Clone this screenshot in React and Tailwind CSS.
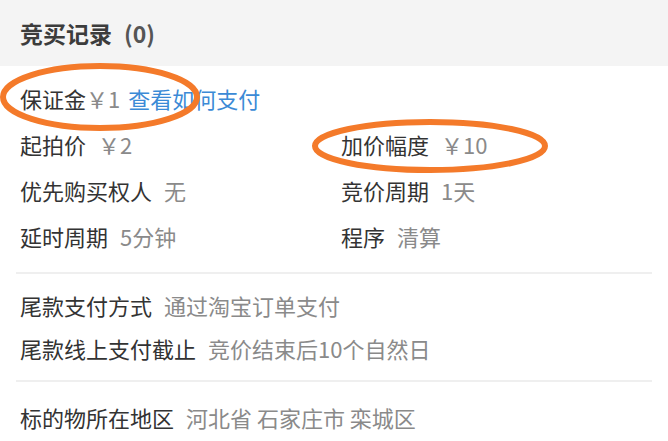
const font = {
  fontFamily: '"Noto Sans CJK SC", "Noto Sans", sans-serif',
};

const Row = ({ label, value, h = "h-[46px]" }) => (
  <div className={`flex items-center ${h} whitespace-nowrap`}>
    <span className="text-[#333333]">{label}</span>
    <span className="ml-3 text-[#8a8a8a]">{value}</span>
  </div>
);

const Divider = () => <div className="mx-4 h-[2px] bg-[#efefef]" />;

export default function App() {
  return (
    <div
      className="relative w-[668px] h-[441px] overflow-hidden bg-white text-[22px] leading-none"
      style={font}
    >
      {/* header */}
      <div className="h-[66px] bg-[#f4f4f4] px-5 flex items-center text-[23px]">
        <span className="font-bold text-[#3c3c3c]">竞买记录</span>
        <span className="ml-3 font-bold text-[#555555]">(0)</span>
      </div>

      {/* auction rules */}
      <div className="px-5 pt-[9px] pb-[13px]">
        <div className="flex items-center h-[46px] whitespace-nowrap">
          <span className="text-[#333333]">保证金</span>
          <span className="text-[#8a8a8a]">￥1</span>
          <span className="ml-2 text-[#3b8ad6]">查看如何支付</span>
        </div>
        <div className="grid grid-cols-[321px_1fr]">
          <Row label="起拍价" value="￥2" />
          <Row label="加价幅度" value="￥10" />
          <Row label="优先购买权人" value="无" />
          <Row label="竞价周期" value="1天" />
          <Row label="延时周期" value="5分钟" />
          <Row label="程序" value="清算" />
        </div>
      </div>

      <Divider />

      {/* payment */}
      <div className="px-5 pt-[9px] pb-[11px]">
        <Row label="尾款支付方式" value="通过淘宝订单支付" h="h-[43px]" />
        <Row label="尾款线上支付截止" value="竞价结束后10个自然日" h="h-[43px]" />
      </div>

      <Divider />

      <div className="px-5 pt-[13px]">
        <Row label="标的物所在地区" value="河北省 石家庄市 栾城区" h="h-[43px]" />
      </div>

      {/* hand-drawn highlight marks */}
      <svg
        className="absolute inset-0 pointer-events-none"
        width="668"
        height="441"
        viewBox="0 0 668 441"
      >
        <ellipse
          cx="100"
          cy="97"
          rx="97"
          ry="31"
          fill="none"
          stroke="#f47a2a"
          strokeWidth="6"
        />
        <ellipse
          cx="430"
          cy="146"
          rx="115"
          ry="24"
          fill="none"
          stroke="#f47a2a"
          strokeWidth="6"
        />
      </svg>
    </div>
  );
}
